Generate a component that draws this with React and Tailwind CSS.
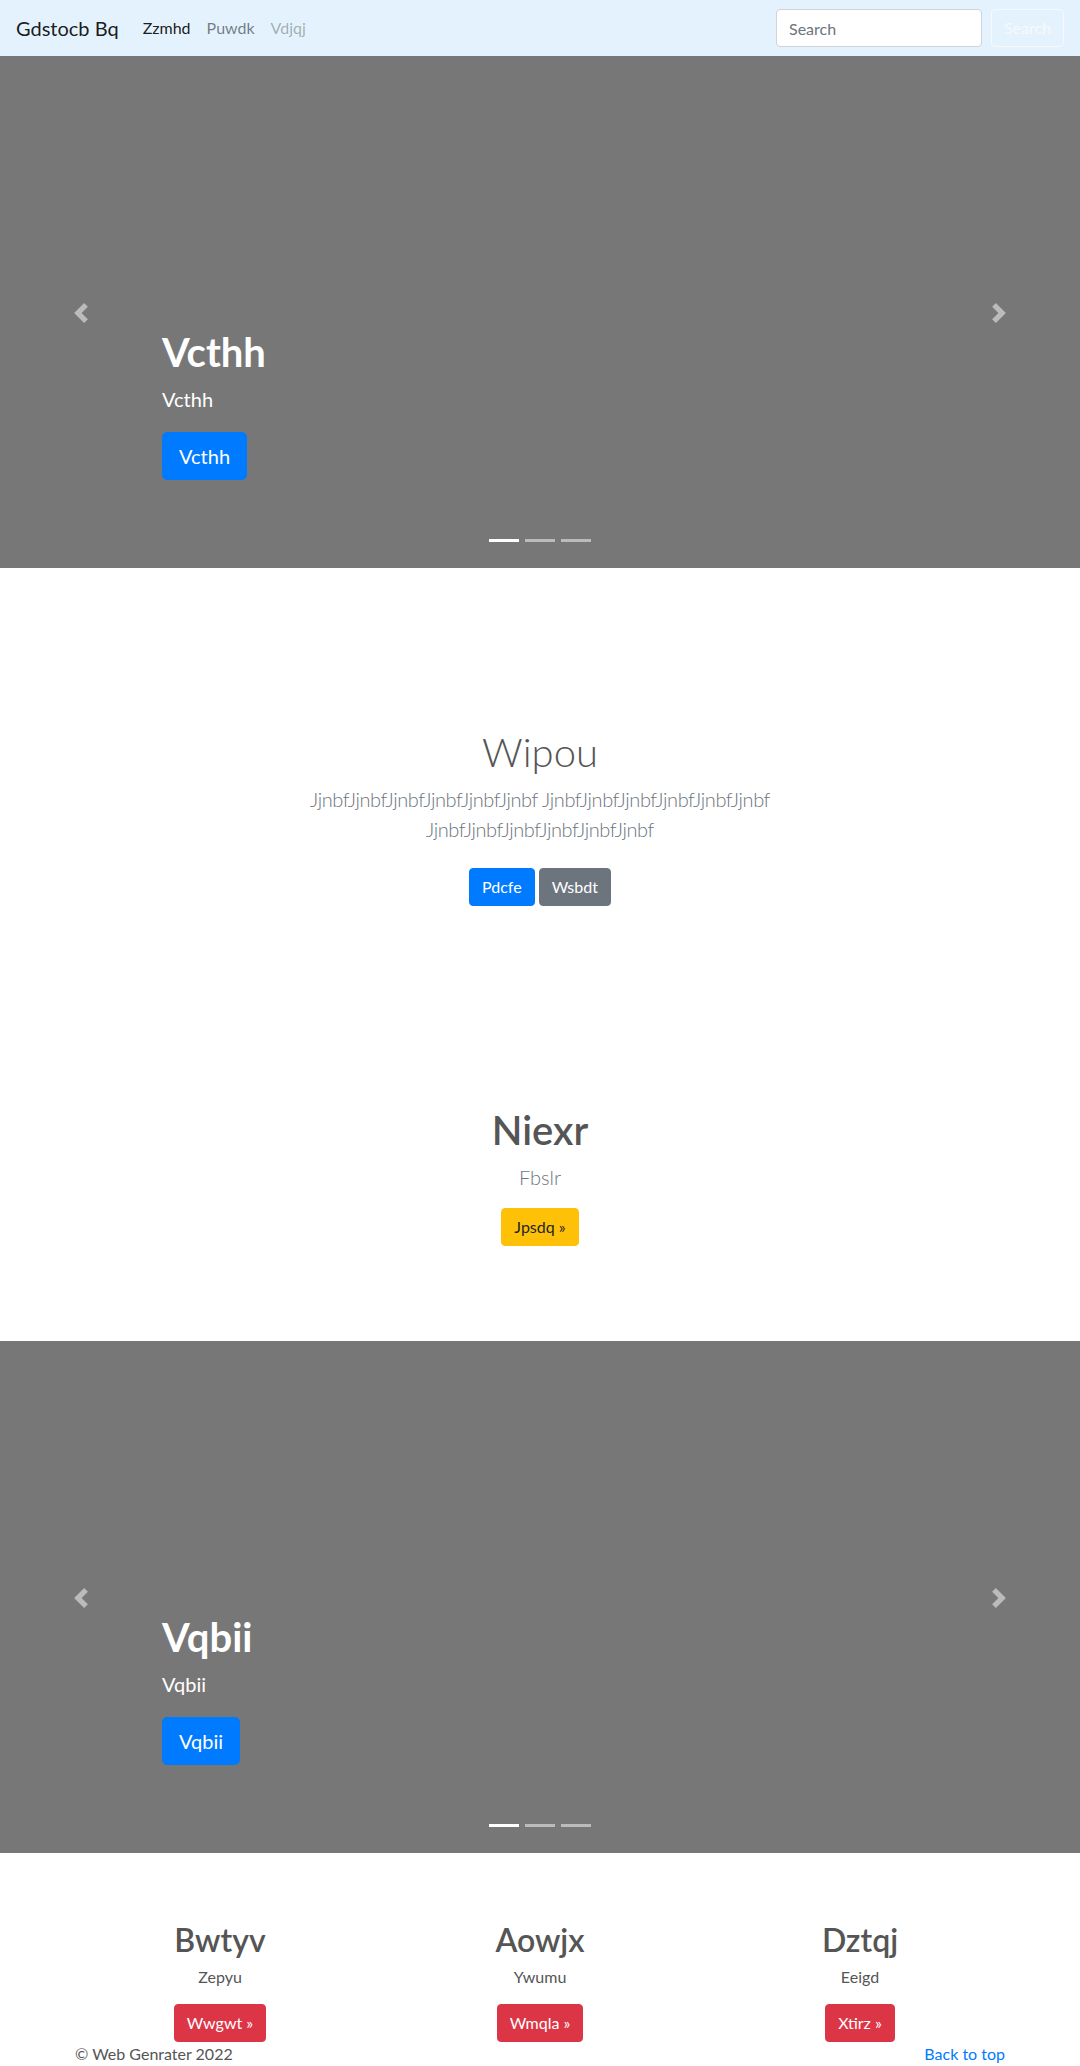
import React from 'react';

// bootstrap 4 carousel chevrons
const Chevron = ({ dir }) => (
  <svg width="20" height="20" viewBox="0 0 8 8" className="opacity-50">
    {dir === 'prev' ? (
      <path fill="#fff" d="M5.25 0l-4 4 4 4 1.5-1.5L4.25 4l2.5-2.5L5.25 0z" />
    ) : (
      <path fill="#fff" d="M2.75 0l-1.5 1.5L3.75 4l-2.5 2.5L2.75 8l4-4-4-4z" />
    )}
  </svg>
);

const Carousel = ({ title }) => (
  <div className="relative h-[512px] bg-[#777777] text-white">
    <div className="absolute left-[71px] top-[247px]">
      <Chevron dir="prev" />
    </div>
    <div className="absolute left-[989px] top-[247px]">
      <Chevron dir="next" />
    </div>

    <div className="pl-[162px] pt-[272px]">
      <h1 className="text-[40px] leading-[48px] font-bold mb-2">{title}</h1>
      <p className="text-[20px] leading-[30px] mb-[18px]">{title}</p>
      <a className="inline-block px-4 py-2 text-[20px] leading-[30px] rounded-[5px] bg-[#007bff] border border-[#007bff] text-white">
        {title}
      </a>
    </div>

    <ol className="absolute left-1/2 -translate-x-1/2 bottom-[26px] flex gap-[6px]">
      <li className="w-[30px] h-[3px] bg-white"></li>
      <li className="w-[30px] h-[3px] bg-white opacity-50"></li>
      <li className="w-[30px] h-[3px] bg-white opacity-50"></li>
    </ol>
  </div>
);

const features = [
  { title: 'Bwtyv', text: 'Zepyu', btn: 'Wwgwt' },
  { title: 'Aowjx', text: 'Ywumu', btn: 'Wmqla' },
  { title: 'Dztqj', text: 'Eeigd', btn: 'Xtirz' },
];

const App = () => {
  return (
    <div className="font-['Lato',sans-serif] text-[#555555] bg-white min-h-[2066px]">
      {/* Navbar */}
      <nav className="h-[56px] bg-[#e3f2fd] flex items-center px-4">
        <a className="text-[20px] leading-[30px] text-black/90 mr-4">Gdstocb Bq</a>
        <ul className="flex text-[16px] leading-[24px]">
          <li className="px-2 text-black/90">Zzmhd</li>
          <li className="px-2 text-black/50">Puwdk</li>
          <li className="px-2 text-black/30">Vdjqj</li>
        </ul>
        <form className="ml-auto flex items-center">
          <input
            type="text"
            placeholder="Search"
            className="w-[206px] h-[38px] px-3 text-[16px] bg-white border border-[#ced4da] rounded-[4px] placeholder:text-[#6c757d] mr-[9px]"
          />
          <button className="h-[38px] w-[73px] text-[16px] text-[#f8f9fa] border border-[#f8f9fa] rounded-[4px]">
            Search
          </button>
        </form>
      </nav>

      <Carousel title="Vcthh" />

      {/* Jumbotron */}
      <section className="text-center pt-[160px]">
        <h1 className="text-[40px] leading-[48px] font-light mb-2">Wipou</h1>
        <p className="text-[20px] leading-[30px] font-light tracking-[-0.4px] text-[#6c757d] mb-4">
          JjnbfJjnbfJjnbfJjnbfJjnbfJjnbf JjnbfJjnbfJjnbfJjnbfJjnbfJjnbf
          <br />
          JjnbfJjnbfJjnbfJjnbfJjnbfJjnbf
        </p>
        <p className="flex justify-center gap-1">
          <a className="my-2 inline-block px-3 py-[6px] text-[16px] leading-[24px] rounded-[4px] bg-[#007bff] border border-[#007bff] text-white">
            Pdcfe
          </a>
          <a className="my-2 inline-block px-3 py-[6px] text-[16px] leading-[24px] rounded-[4px] bg-[#6c757d] border border-[#6c757d] text-white">
            Wsbdt
          </a>
        </p>
      </section>

      <section className="text-center pt-[192px] pb-[95px]">
        <h1 className="text-[40px] leading-[48px] font-semibold mb-2">Niexr</h1>
        <p className="text-[20px] leading-[30px] font-light text-[#6c757d] mb-4">Fbslr</p>
        <a className="inline-block px-3 py-[6px] text-[16px] leading-[24px] rounded-[4px] bg-[#ffc107] border border-[#ffc107] text-[#212529]">
          Jpsdq &raquo;
        </a>
      </section>

      <Carousel title="Vqbii" />

      {/* Marketing */}
      <div className="grid grid-cols-3 mx-[60px] pt-[68px]">
        {features.map((f) => (
          <div key={f.title} className="text-center">
            <h2 className="text-[32px] leading-[38px] font-semibold mb-[6px]">{f.title}</h2>
            <p className="text-[16px] leading-[24px] mb-[15px]">{f.text}</p>
            <a className="inline-block px-3 py-[6px] text-[16px] leading-[24px] rounded-[4px] bg-[#dc3545] border border-[#dc3545] text-white">
              {f.btn} &raquo;
            </a>
          </div>
        ))}
      </div>

      <footer className="flex justify-between px-[75px] text-[16px] leading-[24px]">
        <p>&copy; Web Genrater 2022</p>
        <p>
          <a className="text-[#007bff]">Back to top</a>
        </p>
      </footer>
    </div>
  );
};

export default App;
